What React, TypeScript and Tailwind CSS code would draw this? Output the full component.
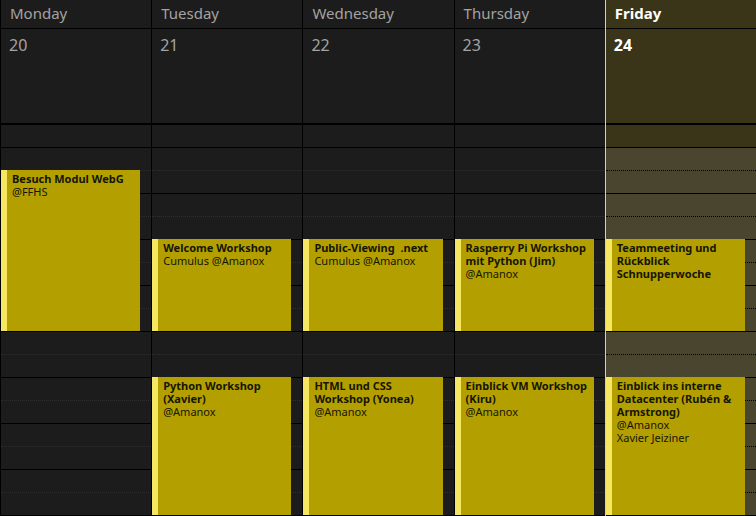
import React from "react";

type Day = {
	name: string;
	date: number;
	today?: boolean;
};

type CalEvent = {
	day: number;
	place: string;
	title: string[];
	lines: string[];
};

const days: Day[] = [
	{ name: "Monday", date: 20 },
	{ name: "Tuesday", date: 21 },
	{ name: "Wednesday", date: 22 },
	{ name: "Thursday", date: 23 },
	{ name: "Friday", date: 24, today: true },
];

// place = grid row placement inside the day body (one row = half an hour)
const events: CalEvent[] = [
	{ day: 0, place: "row-start-3 row-span-7", title: ["Besuch Modul WebG"], lines: ["@FFHS"] },
	{ day: 1, place: "row-start-6 row-span-4", title: ["Welcome Workshop"], lines: ["Cumulus @Amanox"] },
	{ day: 2, place: "row-start-6 row-span-4", title: ["Public-Viewing  .next"], lines: ["Cumulus @Amanox"] },
	{ day: 3, place: "row-start-6 row-span-4", title: ["Rasperry Pi Workshop", "mit Python (Jim)"], lines: ["@Amanox"] },
	{ day: 4, place: "row-start-6 row-span-4", title: ["Teammeeting und", "Rückblick", "Schnupperwoche"], lines: [] },
	{ day: 1, place: "row-start-12 row-span-6", title: ["Python Workshop", "(Xavier)"], lines: ["@Amanox"] },
	{ day: 2, place: "row-start-12 row-span-6", title: ["HTML und CSS", "Workshop (Yonea)"], lines: ["@Amanox"] },
	{ day: 3, place: "row-start-12 row-span-6", title: ["Einblick VM Workshop", "(Kiru)"], lines: ["@Amanox"] },
	{
		day: 4,
		place: "row-start-12 row-span-6",
		title: ["Einblick ins interne", "Datacenter (Rubén &", "Armstrong)"],
		lines: ["@Amanox", "Xavier Jeiziner"],
	},
];

const slots = Array.from({ length: 17 }, (_, i) => i + 1);

const EventCard: React.FC<{ event: CalEvent }> = ({ event }) => {
	return (
		<div
			className={`${event.place} col-start-1 mr-[11px] flex bg-[#b3a000] text-[11px] leading-[13px] text-[#161500]`}
		>
			<div className="w-[6px] shrink-0 bg-[#f6e763]" />
			<div className="pl-[5px] pt-[2px]">
				{event.title.map((t) => (
					<div key={t} className="font-bold whitespace-pre">
						{t}
					</div>
				))}
				{event.lines.map((l) => (
					<div key={l}>{l}</div>
				))}
			</div>
		</div>
	);
};

const DayColumn: React.FC<{ day: Day; index: number }> = ({ day, index }) => {
	const dayEvents = events.filter((e) => e.day === index);

	return (
		<div
			className={`flex flex-col border-l ${
				day.today ? "border-[#e8d85a] bg-[#3a3418]" : "border-black bg-[#1c1c1c]"
			}`}
		>
			<div
				className={`h-[29px] border-b border-black pl-[9px] pt-[3px] text-[15px] leading-[20px] ${
					day.today ? "font-bold text-white" : "text-[#a3a3a3]"
				}`}
			>
				{day.name}
			</div>
			<div
				className={`h-[95px] border-b border-black pl-[8px] pt-[6px] text-[16px] leading-[20px] ${
					day.today ? "font-bold text-white" : "text-[#a3a3a3]"
				}`}
			>
				{day.date}
			</div>
			<div className="grid grid-cols-1 grid-rows-[repeat(17,23px)] border-b border-black">
				{slots.map((s) => (
					<div
						key={s}
						style={{ gridRowStart: s }}
						className={`col-start-1 border-t ${
							s === 1 || s % 2 === 0
								? "border-solid border-black"
								: day.today
									? "border-dotted border-black"
									: "border-dotted border-[#2e2e2e]"
						} ${day.today && s > 1 ? "bg-[#4a452e]" : ""}`}
					/>
				))}
				{dayEvents.map((e) => (
					<EventCard key={e.title.join(" ")} event={e} />
				))}
			</div>
		</div>
	);
};

export default function App() {
	return (
		<div
			className="grid h-[516px] w-[756px] grid-cols-5 overflow-hidden bg-[#1c1c1c]"
			style={{ fontFamily: '"Noto Sans", "Open Sans", sans-serif' }}
		>
			{days.map((day, i) => (
				<DayColumn key={day.name} day={day} index={i} />
			))}
		</div>
	);
}
